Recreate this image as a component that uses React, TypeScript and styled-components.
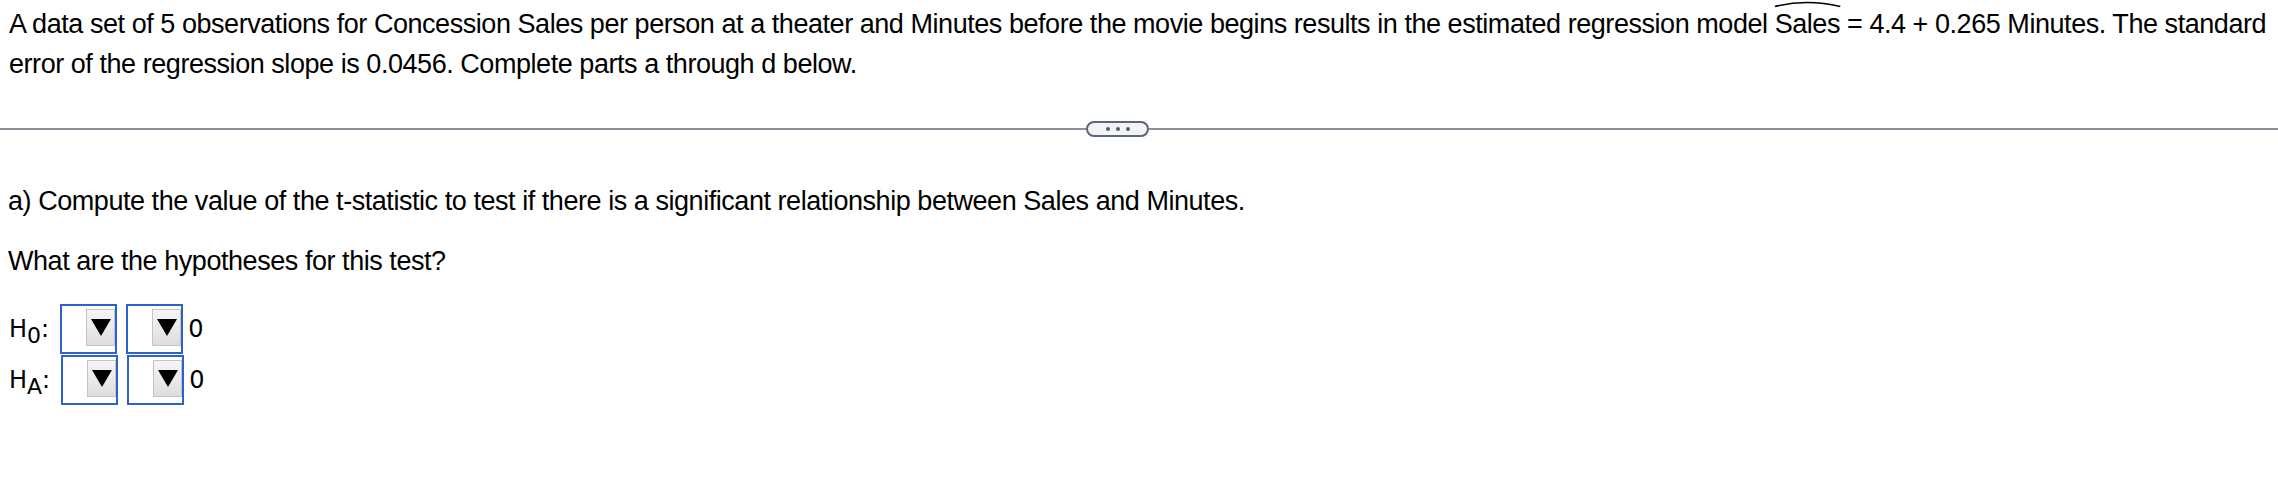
import React from 'react';
import styled, { createGlobalStyle } from 'styled-components';

// Global
const GlobalStyle = createGlobalStyle`
  html, body {
    margin: 0;
    padding: 0;
    background: #fff;
  }
  body {
    font-family: 'Liberation Sans', Arial, Helvetica, sans-serif;
    color: #000;
  }
`;

// Styled Components
const Page = styled.div`
  width: 2278px;
  min-height: 500px;
  padding-top: 4px;
`;

const Intro = styled.p`
  margin: 0;
  padding: 0 8px 0 9px;
  font-size: 27px;
  letter-spacing: -0.45px;
  line-height: 40px;
  white-space: nowrap;
`;

const HatWord = styled.span`
  position: relative;
  display: inline-block;
`;

const Hat = styled.svg`
  position: absolute;
  left: 0;
  top: -3px;
  width: 100%;
  height: 6px;
  overflow: visible;
`;

const DividerRow = styled.div`
  display: grid;
  grid-template-columns: 1086fr auto 1129fr;
  align-items: center;
  margin-top: 37px;
`;

const Rule = styled.div`
  height: 2px;
  background: #8a919c;
`;

const MorePill = styled.button`
  box-sizing: border-box;
  width: 63px;
  height: 16px;
  padding: 0;
  border: 2px solid #5d6674;
  border-radius: 8px;
  background: #f3f4f6;
  display: flex;
  align-items: center;
  justify-content: center;
  gap: 6px;
  cursor: pointer;
`;

const Dot = styled.span`
  width: 4px;
  height: 4px;
  border-radius: 50%;
  background: #555c66;
`;

const Part = styled.section`
  padding: 0 8px;
  margin-top: 49px;
`;

const Question = styled.p<{ $gap?: number }>`
  margin: ${(p) => p.$gap ?? 0}px 0 0;
  font-size: 27px;
  letter-spacing: -0.45px;
  line-height: 30px;
`;

const Hypotheses = styled.div`
  margin-top: 28px;
  display: flex;
  flex-direction: column;
  gap: 1px;
  font-family: 'DejaVu Sans', Verdana, sans-serif;
  font-size: 24px;
`;

const HypRow = styled.div`
  display: flex;
  align-items: center;
  height: 50px;
`;

const HypLabel = styled.span`
  display: inline-block;
  padding-left: 1px;
  margin-right: 11px;
  white-space: nowrap;
`;

const Sub = styled.sub`
  font-size: 22px;
  vertical-align: -6px;
  line-height: 0;
`;

const SelectBox = styled.div`
  box-sizing: border-box;
  width: 57px;
  height: 50px;
  border: 2px solid #2d63c8;
  display: flex;
  justify-content: flex-end;
  align-items: flex-start;
  padding-top: 3px;
  & + & {
    margin-left: 9px;
  }
`;

const ArrowButton = styled.div`
  box-sizing: border-box;
  width: 29px;
  height: 37px;
  border: 1px solid #c4c4c4;
  background: linear-gradient(#f6f6f6, #dedede);
  display: flex;
  align-items: center;
  justify-content: center;
`;

const Value = styled.span`
  margin-left: 5px;
`;

function Dropdown() {
  return (
    <SelectBox>
      <ArrowButton>
        <svg width="20" height="17" viewBox="0 0 20 17">
          <polygon points="0,0 20,0 10,17" fill="#000" />
        </svg>
      </ArrowButton>
    </SelectBox>
  );
}

const hypotheses = [
  { id: 'h0', sub: '0' },
  { id: 'ha', sub: 'A' },
];

export default function App() {
  return (
    <>
      <GlobalStyle />
      <Page>
        <Intro>
          A data set of 5 observations for Concession Sales per person at a
          theater and Minutes before the movie begins results in the estimated
          regression model{' '}
          <HatWord>
            Sales
            <Hat viewBox="0 0 57 6" preserveAspectRatio="none">
              <path
                d="M0 5.5 Q 28 -2.5 57 5.5"
                fill="none"
                stroke="#000"
                strokeWidth="1.6"
              />
            </Hat>
          </HatWord>{' '}
          = 4.4 + 0.265 Minutes. The standard
          <br />
          error of the regression slope is 0.0456. Complete parts a through d
          below.
        </Intro>

        <DividerRow>
          <Rule />
          <MorePill aria-label="more">
            <Dot />
            <Dot />
            <Dot />
          </MorePill>
          <Rule />
        </DividerRow>

        <Part>
          <Question>
            a) Compute the value of the t-statistic to test if there is a
            significant relationship between Sales and Minutes.
          </Question>
          <Question $gap={30}>What are the hypotheses for this test?</Question>

          <Hypotheses>
            {hypotheses.map((h) => (
              <HypRow key={h.id}>
                <HypLabel>
                  H<Sub>{h.sub}</Sub>:
                </HypLabel>
                <Dropdown />
                <Dropdown />
                <Value>0</Value>
              </HypRow>
            ))}
          </Hypotheses>
        </Part>
      </Page>
    </>
  );
}
